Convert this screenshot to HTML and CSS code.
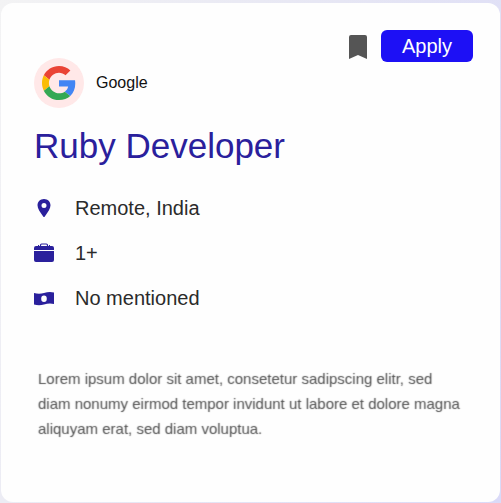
FILE: index.html
```html
<!DOCTYPE html>
<html lang="en">
<head>
<meta charset="utf-8">
<meta name="viewport" content="width=device-width, initial-scale=1">
<title>Ruby Developer</title>
<link rel="stylesheet" href="styles.css">
</head>
<body>
<article class="card">
  <div class="actions">
    <button class="save" type="button" aria-label="Save job">
      <svg width="18" height="24" viewBox="0 0 18 24"><path fill="#555" d="M2 0h14q2 0 2 2v22l-9-4-9 4V2q0-2 2-2z"/></svg>
    </button>
    <button class="apply" type="button">Apply</button>
  </div>
  <div class="company">
    <span class="logo">
      <svg width="34" height="34" viewBox="0 0 48 48">
        <path fill="#EA4335" d="M24 9.5c3.54 0 6.71 1.22 9.21 3.6l6.85-6.85C35.9 2.38 30.47 0 24 0 14.62 0 6.51 5.38 2.56 13.22l7.98 6.19C12.43 13.72 17.74 9.5 24 9.5z"/>
        <path fill="#4285F4" d="M46.98 24.55c0-1.57-.15-3.09-.38-4.55H24v9.02h12.94c-.58 2.96-2.26 5.48-4.78 7.18l7.73 6c4.51-4.18 7.09-10.36 7.09-17.65z"/>
        <path fill="#FBBC05" d="M10.53 28.59c-.48-1.45-.76-2.99-.76-4.59s.27-3.14.76-4.59l-7.98-6.19C.92 16.46 0 20.12 0 24s.92 7.54 2.56 10.78l7.97-6.19z"/>
        <path fill="#34A853" d="M24 48c6.48 0 11.93-2.13 15.89-5.81l-7.73-6c-2.15 1.45-4.92 2.3-8.16 2.3-6.26 0-11.57-4.22-13.47-9.91l-7.98 6.19C6.51 42.62 14.62 48 24 48z"/>
      </svg>
    </span>
    <span>Google</span>
  </div>
  <h1 class="title">Ruby Developer</h1>
  <ul class="facts">
    <li>
      <svg width="20" height="20" viewBox="0 0 20 20"><path fill="#2a209c" fill-rule="evenodd" d="M10 1c3.8 0 6.500 2.800 6.500 6.300 0 3-2.500 7-5.700 11.200q-.8 1-1.600 0C6 14.300 3.500 10.300 3.500 7.300 3.500 3.800 6.200 1 10 1zm0 4a2.500 2.500 0 1 0 0 5 2.500 2.500 0 0 0 0-5z"/></svg>
      <span>Remote, India</span>
    </li>
    <li>
      <svg width="20" height="20" viewBox="0 0 20 20"><path fill="none" stroke="#2a209c" stroke-width="1.200" d="M6.500 4V2.200q0-1.200 1.200-1.200h4.600q1.200 0 1.200 1.200V4"/><path fill="#2a209c" d="M2 3h2V2h1v1h10V2h1v1h2q2 0 2 2v2H0V5q0-2 2-2zM0 8h20v9q0 2-2 2H2q-2 0-2-2z"/></svg>
      <span>1+</span>
    </li>
    <li>
      <svg width="20" height="20" viewBox="0 0 20 20"><path fill="#2a209c" fill-rule="evenodd" d="M0 5q5 1.500 10 0t10-.500V16q-5-1-10 .500T0 16.500zm10 2.500a2.800 3.200 0 1 0 0 6.400 2.800 3.200 0 0 0 0-6.400z"/></svg>
      <span>No mentioned</span>
    </li>
  </ul>
  <p class="summary">Lorem ipsum dolor sit amet, consetetur sadipscing elitr, sed diam nonumy eirmod tempor invidunt ut labore et dolore magna aliquyam erat, sed diam voluptua.</p>
</article>
</body>
</html>
```
FILE: styles.css
```css
* {
  box-sizing: border-box;
}

body {
  margin: 0;
  padding: 3px 1px 1px;
  min-height: 100vh;
  display: flex;
  background: linear-gradient(110deg, #f3f3f4 0%, #e6e6f4 50%, #dadaf8 100%);
  font-family: "Liberation Sans", Arial, sans-serif;
  color: #2b2b2b;
}

.card {
  flex: 1;
  padding: 27px 27px 32px 33px;
  border-radius: 12px;
  background: #fefefe;
}

.actions {
  display: flex;
  justify-content: flex-end;
  align-items: center;
  gap: 14px;
}

button {
  border: 0;
  padding: 0;
  font: inherit;
}

.save {
  display: flex;
  padding-top: 2px;
  background: none;
}

.apply {
  width: 92px;
  height: 32px;
  border-radius: 6px;
  background: #1d10f5;
  color: #fff;
  font-size: 20px;
}

.company {
  display: flex;
  align-items: center;
  gap: 12px;
  margin-top: -4px;
  font-size: 16px;
  color: #111;
}

.logo {
  display: flex;
  align-items: center;
  justify-content: center;
  width: 50px;
  height: 50px;
  border-radius: 50%;
  background: #ffe8e8;
}

.title {
  margin: 18px 0 0;
  font-size: 35px;
  line-height: 40px;
  font-weight: 400;
  color: #2a209c;
}

.facts {
  display: grid;
  gap: 21px;
  margin: 30px 0 0;
  padding: 0;
  list-style: none;
  font-size: 20px;
  line-height: 24px;
}

.facts li {
  display: flex;
  align-items: center;
  gap: 21px;
}

.summary {
  max-width: 431px;
  margin: 56px 0 0;
  padding-left: 4px;
  font-size: 15px;
  line-height: 25px;
  color: transparent;
  text-shadow: 0 0 1px #555;
}
```
